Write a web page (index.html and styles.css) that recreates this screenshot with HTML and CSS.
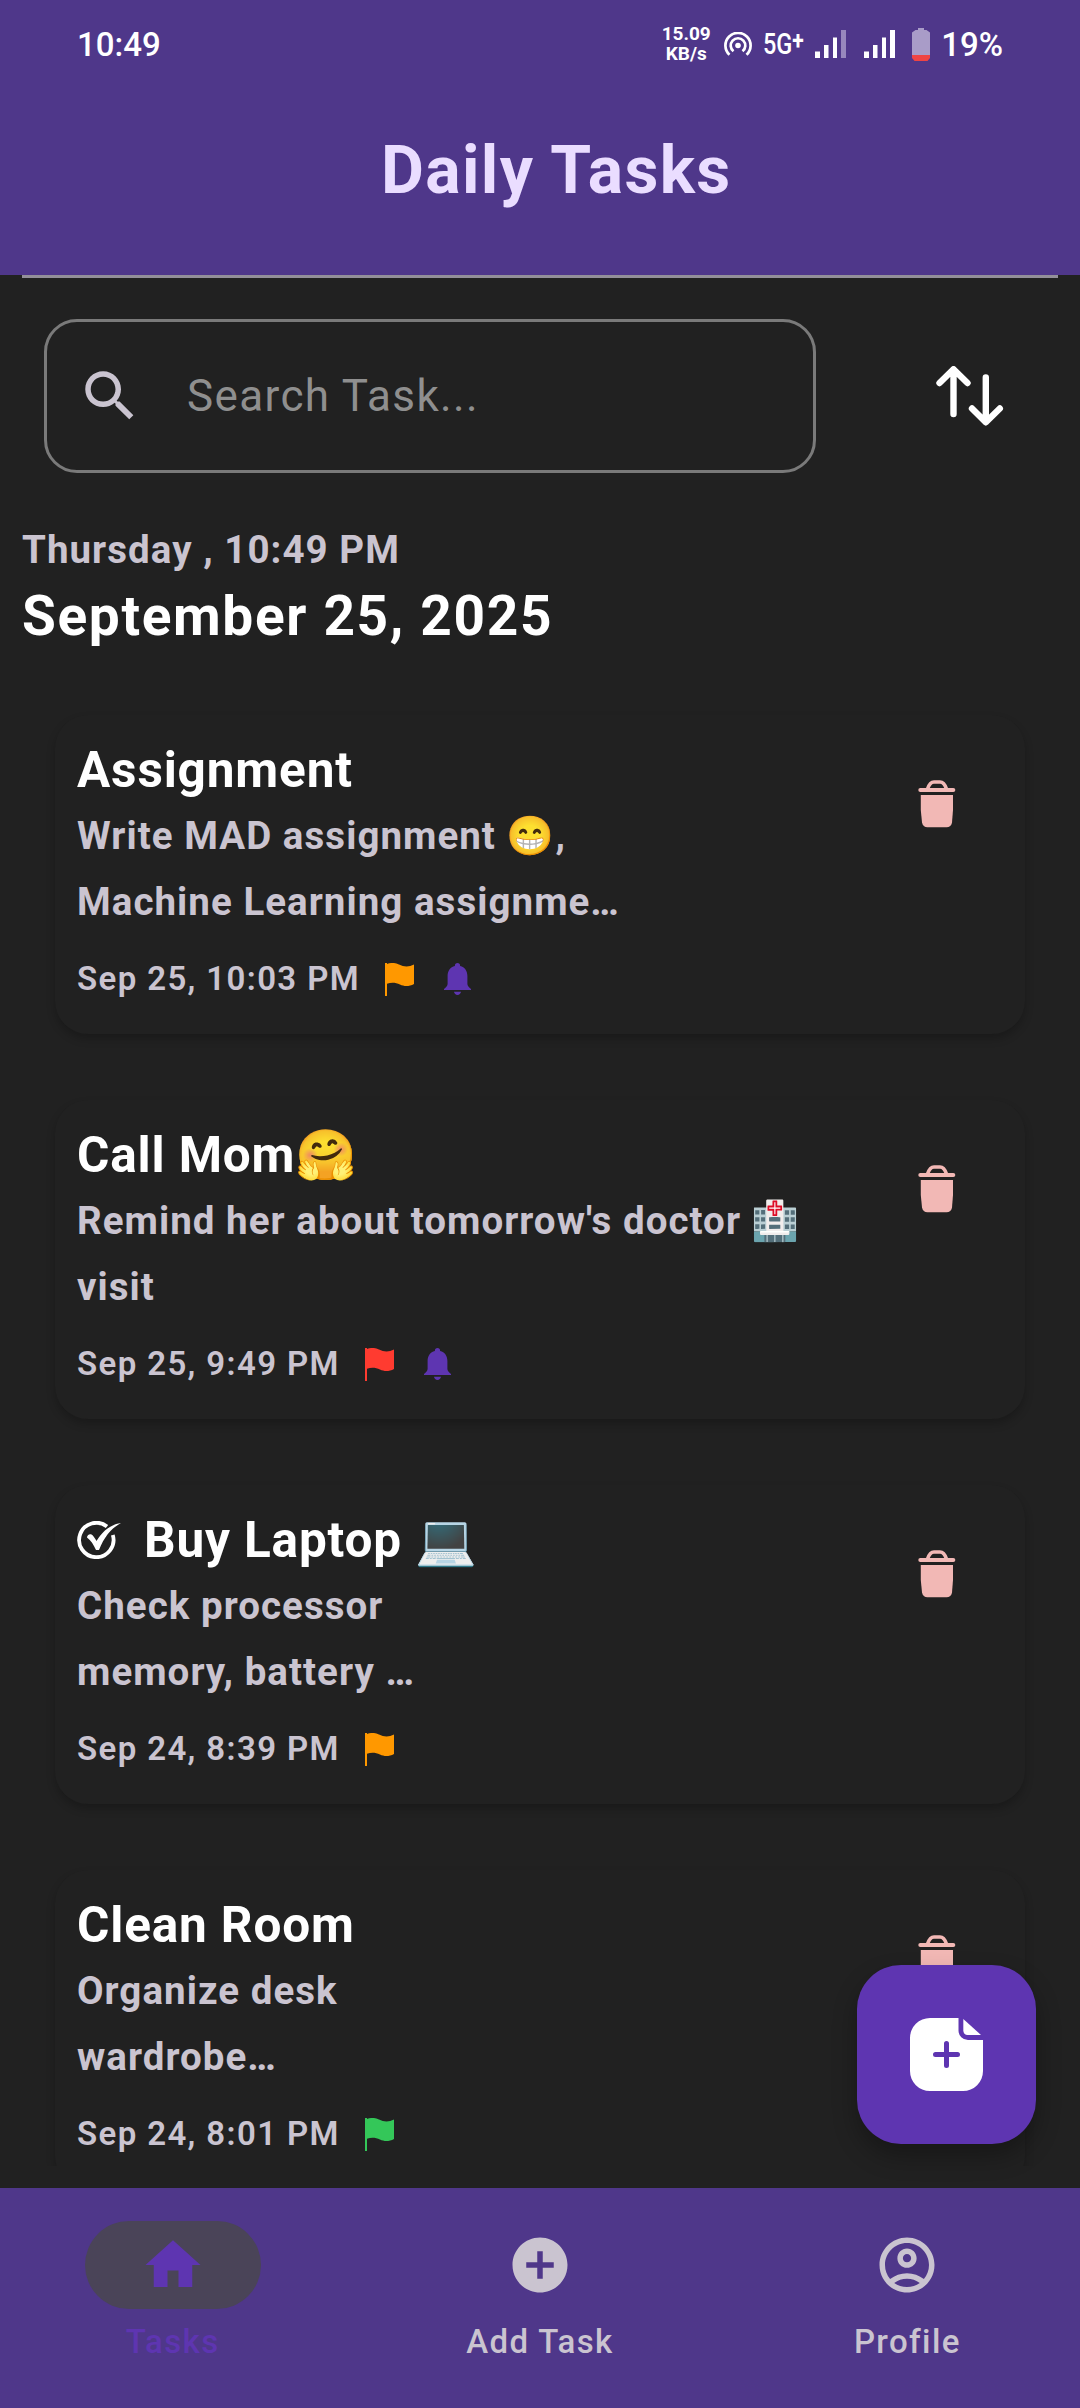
FILE: index.html
```html
<!DOCTYPE html>
<html lang="en">
<head>
<meta charset="utf-8">
<title>Daily Tasks</title>
<link rel="stylesheet" href="styles.css">
</head>
<body>
<svg class="defs" width="0" height="0" aria-hidden="true">
  <symbol id="trash" viewBox="0 0 38 48">
    <path d="M9.500 9C11 4.500 12.500 2 16 2h6c3.500 0 5 2.500 6.500 7" fill="none" stroke="currentColor" stroke-width="3.600"/>
    <rect x="0.300" y="8" width="37" height="4" rx="2"/>
    <path d="M2.800 15h32.200v15l-1 12.500c-.4 3-2.500 4.800-5.500 4.800h-19c-3 0-5-1.800-5.500-4.800L2.800 30z"/>
  </symbol>
  <symbol id="flag" viewBox="0 0 29 33">
    <path d="M0 0h2v1c4-1.500 8-1.500 12 .5 5 2.500 10 2.500 15 0V21c-5 2.700-10 2.500-14 .5-4.500-2.200-9-2.200-13-.7V33H0z"/>
  </symbol>
  <symbol id="bell" viewBox="0 0 27 32">
    <path d="M13.500 0c1.600 0 2.600 1 2.600 2.400v.5c4.700 1.200 7.300 5 7.300 10V21c0 2 1.500 3 3.600 5v1H0v-1c2.100-2 3.600-3 3.600-5v-8.100c0-5 2.600-8.800 7.300-10v-.5C10.900 1 11.900 0 13.500 0zM10 28.800h7c-.3 2-1.700 3.200-3.500 3.200s-3.200-1.200-3.500-3.200z"/>
  </symbol>
</svg>

<div class="screen">
  <header class="header">
    <div class="status">
      <span class="clock">10:49</span>
      <div class="status-right">
        <span class="speed">15.09<br>KB/s</span>
        <svg class="hotspot" width="28" height="24" viewBox="0 0 28 24" fill="none" stroke="#fff" stroke-width="2.700">
          <circle cx="14" cy="13.500" r="2.800" fill="#fff" stroke="none"/>
          <path d="M9.500 19.300a7.300 7.300 0 1 1 9 0"/>
          <path d="M5.500 22.800a12.600 12.600 0 1 1 17 0"/>
        </svg>
        <span class="network">5G<sup>+</sup></span>
        <svg class="signal" width="31" height="28" viewBox="0 0 31 28" fill="#fff">
          <path d="M0 21.500h5V28H0zM9 15h4.500v13H9zM18 7.500h4V28h-4z"/><path d="M26 0h5v28h-5z" fill="#9888bd"/>
        </svg>
        <svg class="signal second" width="31" height="28" viewBox="0 0 31 28" fill="#fff">
          <path d="M0 21.500h5V28H0zM9 15h4.500v13H9zM18 7.500h4V28h-4zM26 0h5v28h-5z"/>
        </svg>
        <svg class="battery" width="18" height="33" viewBox="0 0 18 33">
          <path d="M6 0h6v2h2.500L18 4.500V27H0V4.500L3.500 2H6z" fill="#a99cc8"/><path d="M0 27h18v3l-2.500 3h-13L0 30z" fill="#ef4444"/>
        </svg>
        <span class="percent">19%</span>
      </div>
    </div>
    <h1 class="page-title">Daily Tasks</h1>
  </header>

  <main class="content">
    <hr class="rule">
    <div class="search-row">
      <div class="search">
        <svg width="66" height="66" viewBox="0 0 24 24" fill="#cac4d0"><path d="M15.500 14h-.79l-.28-.27C15.410 12.590 16 11.110 16 9.500 16 5.910 13.090 3 9.500 3S3 5.910 3 9.500 5.910 16 9.500 16c1.610 0 3.090-.59 4.230-1.570l.27.28v.79l5 4.990L20.490 19l-4.990-5zm-6 0C7.010 14 5 11.990 5 9.500S7.010 5 9.500 5 14 7.010 14 9.500 11.990 14 9.500 14z"/></svg>
        <span class="placeholder">Search Task...</span>
      </div>
      <svg class="sort" width="68" height="60" viewBox="0 0 68 60" fill="none" stroke="#fff" stroke-width="6.400" stroke-linecap="round" stroke-linejoin="round">
        <path d="M17.500 48V3.500M3.500 17L17.500 3.300 31.500 17M49.800 11.500V56M36 42.500L49.800 56.300 63.800 42.500"/>
      </svg>
    </div>

    <div class="date">
      <div class="day">Thursday , 10:49 PM</div>
      <div class="full-date">September 25, 2025</div>
    </div>

    <div class="list">
      <article class="card">
        <div class="card-text">
          <h2 class="title">Assignment</h2>
          <p class="desc">Write MAD assignment 😁,<br>Machine Learning assignme…</p>
          <div class="meta"><span>Sep 25, 10:03 PM</span><svg class="flag medium"><use href="#flag"/></svg><svg class="bell"><use href="#bell"/></svg></div>
        </div>
        <svg class="trash"><use href="#trash"/></svg>
      </article>
      <article class="card">
        <div class="card-text">
          <h2 class="title">Call Mom🤗</h2>
          <p class="desc">Remind her about tomorrow's doctor 🏥<br>visit</p>
          <div class="meta"><span>Sep 25, 9:49 PM</span><svg class="flag high"><use href="#flag"/></svg><svg class="bell"><use href="#bell"/></svg></div>
        </div>
        <svg class="trash"><use href="#trash"/></svg>
      </article>
      <article class="card">
        <div class="card-text">
          <h2 class="title">
            <svg class="done" width="44" height="38" viewBox="0 0 44 38"><path d="M30 5.500A17.200 17.200 0 1 0 35.800 14" fill="none" stroke="#fff" stroke-width="3.800"/><path d="M10 16.500c0-2.500 2.500-4 4.500-3 1.800 1 3.500 4 5 6.500C25 11 33 3.500 44 2c-10 5.500-16.500 13.500-22 27h-3C16.500 23.500 14 19.500 10 16.500z" fill="#fff"/></svg>
            <span>Buy Laptop 💻</span>
          </h2>
          <p class="desc">Check processor<br>memory, battery …</p>
          <div class="meta"><span>Sep 24, 8:39 PM</span><svg class="flag medium"><use href="#flag"/></svg></div>
        </div>
        <svg class="trash"><use href="#trash"/></svg>
      </article>
      <article class="card">
        <div class="card-text">
          <h2 class="title">Clean Room</h2>
          <p class="desc">Organize desk<br>wardrobe…</p>
          <div class="meta"><span>Sep 24, 8:01 PM</span><svg class="flag low"><use href="#flag"/></svg></div>
        </div>
        <svg class="trash"><use href="#trash"/></svg>
      </article>
    </div>
  </main>

  <div class="fab">
    <svg width="73" height="73" viewBox="0 0 73 73">
      <path d="M20 0H48.500V12.500a9.500 9.500 0 0 0 9.500 9.500H73V53a20 20 0 0 1-20 20H20A20 20 0 0 1 0 53V20A20 20 0 0 1 20 0z" fill="#fff"/>
      <path d="M53.300 1L71 17H57.500a4.200 4.200 0 0 1-4.200-4.200z" fill="#fff"/>
      <path d="M36.500 25.500v22M25.500 36.500h22" stroke="#5e35b1" stroke-width="5" stroke-linecap="round"/>
    </svg>
  </div>

  <nav class="nav">
    <div class="nav-item active">
      <div class="pill"><svg width="66" height="66" viewBox="0 0 24 24"><path d="M10 20v-6h4v6h5v-8h3L12 3 2 12h3v8z"/></svg></div>
      <span class="label">Tasks</span>
    </div>
    <div class="nav-item">
      <div class="pill"><svg width="66" height="66" viewBox="0 0 24 24"><path d="M12 2C6.480 2 2 6.480 2 12s4.480 10 10 10 10-4.480 10-10S17.520 2 12 2zm5 11h-4v4h-2v-4H7v-2h4V7h2v4h4v2z"/></svg></div>
      <span class="label">Add Task</span>
    </div>
    <div class="nav-item">
      <div class="pill"><svg width="66" height="66" viewBox="0 0 24 24"><path d="M12 2C6.480 2 2 6.480 2 12s4.480 10 10 10 10-4.480 10-10S17.520 2 12 2zM7.350 18.500C8.660 17.560 10.260 17 12 17s3.340.56 4.650 1.500C15.340 19.440 13.740 20 12 20s-3.340-.56-4.650-1.500zm10.790-1.380C16.450 15.800 14.320 15 12 15s-4.450.8-6.140 2.120C4.700 15.730 4 13.950 4 12c0-4.420 3.580-8 8-8s8 3.580 8 8c0 1.950-.7 3.730-1.860 5.120z"/><path d="M12 6c-1.930 0-3.500 1.570-3.500 3.500S10.070 13 12 13s3.500-1.570 3.500-3.500S13.930 6 12 6zm0 5c-.83 0-1.500-.67-1.500-1.500S11.170 8 12 8s1.500.67 1.500 1.500S12.830 11 12 11z"/></svg></div>
      <span class="label">Profile</span>
    </div>
  </nav>
</div>
</body>
</html>
```
FILE: styles.css
```css
* { box-sizing: border-box; }

body {
  margin: 0;
  background: #212121;
  font-family: Roboto, "Noto Color Emoji", sans-serif;
  color: #fff;
}

.defs { display: none; }
svg { flex: none; }

.screen {
  width: 1080px;
  height: 2408px;
  display: flex;
  flex-direction: column;
  position: relative;
  overflow: hidden;
}

/* Header */
.header {
  height: 275px;
  flex: none;
  background: #4f378a;
}

.status {
  height: 88px;
  padding: 0 77px 0 77px;
  display: flex;
  align-items: center;
  justify-content: space-between;
  font-weight: 500;
  font-size: 33px;
}

.status-right {
  display: flex;
  align-items: center;
}

.speed {
  font-size: 19px;
  line-height: 20px;
  font-weight: 700;
  text-align: center;
  width: 50px;
}

.hotspot { margin-left: 13px; }

.network {
  width: 44px;
  margin-left: 11px;
  font-size: 29px;
  font-weight: 500;
  white-space: nowrap;
  transform: scaleX(0.81);
  transform-origin: left;
}

.network sup {
  font-size: 26px;
  font-weight: 700;
  line-height: 0;
  vertical-align: 5px;
}

.signal { margin-left: 8px; }
.signal.second { margin-left: 18px; }
.battery { margin-left: 17px; }
.percent { margin-left: 11px; }

.page-title {
  margin: 0;
  padding-left: 381px;
  font-size: 66px;
  line-height: 165px;
  font-weight: 700;
  letter-spacing: 1.375px;
  color: #eaddff;
}

/* Body */
.content {
  flex: none;
  height: 1891px;
  padding: 0 22px;
  overflow: hidden;
}

.rule {
  height: 3px;
  margin: 0 0 41px;
  border: 0;
  background: #938f99;
}

.search-row {
  display: flex;
  align-items: center;
  justify-content: space-between;
  padding: 0 54px 0 22px;
}

.search {
  width: 772px;
  height: 154px;
  padding: 0 30px;
  display: flex;
  align-items: center;
  gap: 44px;
  border: 3px solid #7a7a7a;
  border-radius: 33px;
}

.placeholder {
  font-size: 44px;
  letter-spacing: 1.375px;
  color: #8f8f8f;
}

.date {
  margin-top: 44px;
  font-weight: 700;
  line-height: 66px;
}

.day { font-size: 38.5px; letter-spacing: 1.04px; color: #cac4d0; }
.full-date { font-size: 55px; letter-spacing: 1.65px; }

.list {
  display: flex;
  flex-direction: column;
  gap: 66px;
  padding: 66px 33px 0;
}

.card {
  height: 319px;
  flex: none;
  padding: 22px 69px 22px 22px;
  display: flex;
  justify-content: space-between;
  border-radius: 33px;
  background: #212121;
  box-shadow: 0 5px 9px rgba(0, 0, 0, 0.22);
}

.title {
  margin: 0;
  display: flex;
  align-items: center;
  gap: 23px;
  height: 66px;
  font-size: 49.5px;
  line-height: 66px;
  font-weight: 700;
  letter-spacing: 0.85px;
  white-space: nowrap;
}

.desc {
  margin: 0;
  height: 132px;
  font-size: 38.5px;
  line-height: 66px;
  font-weight: 700;
  letter-spacing: 1.04px;
  color: #cac4d0;
  white-space: nowrap;
}

.meta {
  margin-top: 11px;
  height: 66px;
  display: flex;
  align-items: center;
  font-size: 33px;
  line-height: 66px;
  font-weight: 600;
  letter-spacing: 1.375px;
  color: #cac4d0;
}

.flag { width: 29px; height: 33px; margin-left: 25px; }
.flag.medium { fill: #ff9800; }
.flag.high { fill: #ff3b30; }
.flag.low { fill: #34c759; }
.bell { width: 27px; height: 32px; margin-left: 30px; fill: #5e35b1; }

.trash {
  width: 38px;
  height: 48px;
  margin-top: 43px;
  color: #f2b8b5;
  fill: #f2b8b5;
}

/* Floating button lies over the list */
.fab {
  position: absolute;
  right: 44px;
  bottom: 264px;
  width: 179px;
  height: 179px;
  display: flex;
  align-items: center;
  justify-content: center;
  border-radius: 44px;
  background: #5e35b1;
  box-shadow: 0 12px 24px rgba(0, 0, 0, 0.3);
}

/* Bottom navigation */
.nav {
  height: 220px;
  margin-top: auto;
  padding-top: 33px;
  display: flex;
  gap: 22px;
  background: #4f378a;
  position: relative;
}

.nav-item {
  flex: 1;
  display: flex;
  flex-direction: column;
  align-items: center;
  gap: 11px;
  color: #cac4d0;
  fill: #cac4d0;
}

.nav-item.active { color: #5e35b1; fill: #5e35b1; }

.pill {
  width: 176px;
  height: 88px;
  display: flex;
  align-items: center;
  justify-content: center;
  border-radius: 44px;
}

.active .pill { background: #4a4458; }

.label {
  font-size: 33px;
  line-height: 44px;
  font-weight: 500;
  letter-spacing: 1.375px;
}
```
